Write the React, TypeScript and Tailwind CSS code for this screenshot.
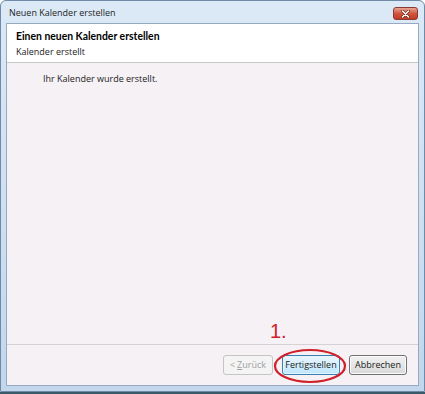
import React from 'react';

const font = { fontFamily: '"Open Sans", "Noto Sans", sans-serif' };

function WinButton({
  children,
  primary,
  disabled,
}: {
  children: React.ReactNode;
  primary?: boolean;
  disabled?: boolean;
}) {
  let look = 'w-[58px] border-[#707070] from-[#f2f2f2] to-[#d9d9d9] shadow-[inset_0_0_0_1px_#fbfbfb] text-[#1a1a1a]';
  if (primary) look = 'w-[58px] border-[#3c7fb1] from-[#eaf6fd] to-[#bee6fd] shadow-[inset_0_0_0_1px_#e5f4fc] text-[#1a1a1a]';
  if (disabled) look = 'w-[50px] border-[#c5c5c5] from-[#f4f4f4] to-[#f4f4f4] text-[#a0a0a0]';
  return (
    <button className={`h-[20px] rounded-[3px] border text-[9px] leading-none flex items-center justify-center bg-gradient-to-b ${look}`}>
      {children}
    </button>
  );
}

export default function App() {
  return (
    <div className="w-[425px] h-[394px] bg-white overflow-hidden relative" style={font}>
      <div className="h-[392px] flex flex-col rounded-t-[6px] border border-[#6f8aa6] bg-gradient-to-b from-[#dce9f6] via-[#cfe0f1] to-[#c2d6ec]">
        {/* title bar */}
        <div className="h-[22px] flex items-center justify-between pl-[8px] pr-[6px]">
          <span className="text-[9px] text-[#1e1e1e] pt-[2px]">Neuen Kalender erstellen</span>
          <div className="w-[25px] h-[13px] mt-[3px] rounded-[3px] border border-[#8a3a32] bg-gradient-to-b from-[#e8a493] via-[#d0553d] to-[#c23a26] flex items-center justify-center">
            <svg width="9" height="8" viewBox="0 0 9 8">
              <path d="M1.5 1 L7.5 7 M7.5 1 L1.5 7" stroke="#5a1a10" strokeWidth="2.6" strokeLinecap="round" />
              <path d="M1.5 1 L7.5 7 M7.5 1 L1.5 7" stroke="#ffffff" strokeWidth="1.6" strokeLinecap="round" />
            </svg>
          </div>
        </div>

        {/* content */}
        <div className="flex-1 mx-[5px] border border-[#96abc2] flex flex-col bg-[#f5f1f5]">
          <div className="h-[39px] bg-white flex flex-col justify-center pl-[9px] border-b border-[#c8c8c8]">
            <div className="text-[10.4px] font-bold text-black leading-[16px]" style={{ fontFamily: 'Lato, "Open Sans", sans-serif' }}>
              Einen neuen Kalender erstellen
            </div>
            <div className="text-[9px] text-[#222] leading-[15px]">Kalender erstellt</div>
          </div>
          <div className="flex-1 pl-[36px] pt-[9px]">
            <div className="text-[9px] text-[#222]">Ihr Kalender wurde erstellt.</div>
          </div>
          <div className="h-[41px] border-t border-[#d5d1d5] flex items-center justify-end gap-[9px] pr-[11px] pb-[1px]">
            <WinButton disabled>
              &lt; <span className="underline ml-[2px]">Z</span>urück
            </WinButton>
            <WinButton primary>Fertigstellen</WinButton>
            <WinButton>Abbrechen</WinButton>
          </div>
        </div>
        <div className="h-[5px]" />
      </div>
      <div className="h-[2px] bg-[#3a5a6a]" />

      {/* annotation overlay */}
      <span className="absolute left-[270px] top-[321px] text-[20px] leading-none text-[#d0202a]" style={{ fontFamily: '"Liberation Sans", sans-serif' }}>
        1.
      </span>
      <svg className="absolute left-[272px] top-[346px]" width="76" height="40" viewBox="0 0 76 40">
        <ellipse cx="38" cy="20" rx="35" ry="16" fill="none" stroke="#d0202a" strokeWidth="2.2" />
      </svg>
    </div>
  );
}
